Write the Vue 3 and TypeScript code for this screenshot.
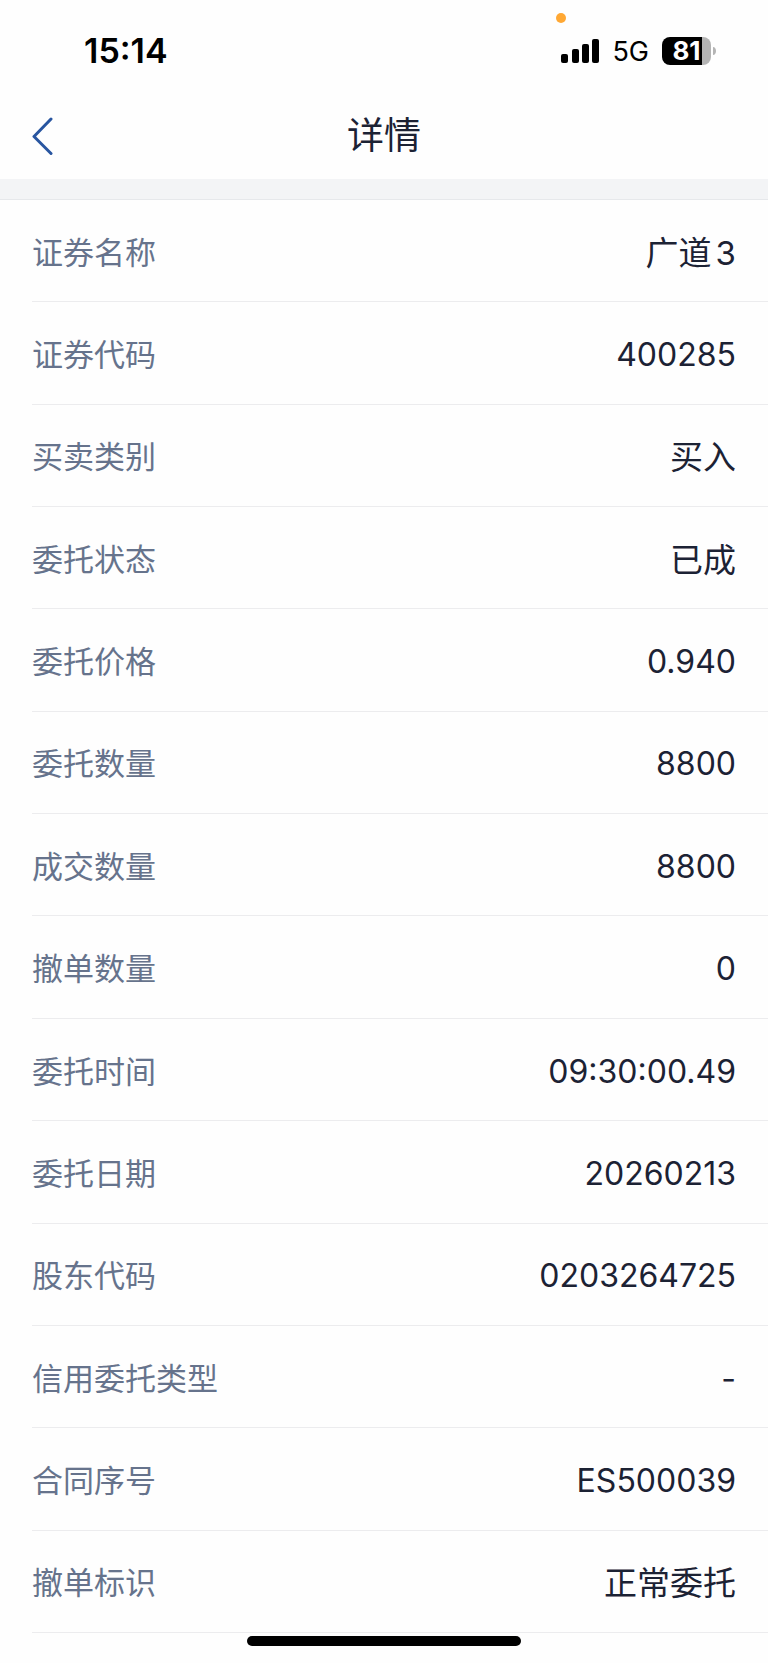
<script setup lang="ts">
interface Field {
  label: string
  value: string
}

const fields: Field[] = [
  { label: '证券名称', value: '广道3' },
  { label: '证券代码', value: '400285' },
  { label: '买卖类别', value: '买入' },
  { label: '委托状态', value: '已成' },
  { label: '委托价格', value: '0.940' },
  { label: '委托数量', value: '8800' },
  { label: '成交数量', value: '8800' },
  { label: '撤单数量', value: '0' },
  { label: '委托时间', value: '09:30:00.49' },
  { label: '委托日期', value: '20260213' },
  { label: '股东代码', value: '0203264725' },
  { label: '信用委托类型', value: '-' },
  { label: '合同序号', value: 'ES500039' },
  { label: '撤单标识', value: '正常委托' },
]

const isLatin = (value: string): boolean => /^[\w.:-]+$/.test(value)
</script>

<template>
  <div class="screen">
    <div class="status">
      <time class="clock">15:14</time>
      <div class="indicators">
        <svg class="signal" viewBox="0 0 40 26" aria-hidden="true">
          <rect x="1" y="16" width="7" height="9" rx="2" />
          <rect x="12" y="11" width="7" height="14" rx="2" />
          <rect x="22" y="6" width="7" height="19" rx="2" />
          <rect x="32" y="1" width="7" height="24" rx="2" />
        </svg>
        <span class="network">5G</span>
        <div class="battery">
          <div class="cell"><span class="level">81</span></div>
          <svg class="cap" viewBox="0 0 4 10" aria-hidden="true">
            <path d="M0 1C2 1 3 3 3 5S2 9 0 9Z" />
          </svg>
        </div>
      </div>
      <span class="recording"></span>
    </div>

    <header class="nav">
      <button class="back" type="button" aria-label="返回">
        <svg viewBox="0 0 22 40" aria-hidden="true">
          <path d="M19 3L2 20.500L19 37.500" />
        </svg>
      </button>
      <h1 class="title">详情</h1>
    </header>

    <div class="band"></div>

    <dl class="list">
      <div v-for="field in fields" :key="field.label" class="row">
        <dt>{{ field.label }}</dt>
        <dd :class="{ latin: isLatin(field.value) }">{{ field.value }}</dd>
      </div>
    </dl>

    <div class="footer"><span class="home"></span></div>
  </div>
</template>

<style>
body {
  margin: 0;
  background: #fefefe;
}
</style>

<style scoped>
.screen {
  display: flex;
  flex-direction: column;
  min-height: 100vh;
  background: #fefefe;
  color: #1c2234;
  font-family: Inter, "Noto Sans CJK SC", sans-serif;
}

.status {
  position: relative;
  display: flex;
  align-items: center;
  justify-content: space-between;
  box-sizing: border-box;
  height: 90px;
  padding: 12px 51px 0 84px;
  color: #000;
}

.clock {
  font-size: 34px;
  font-weight: 600;
  line-height: 40px;
}

.indicators {
  display: flex;
  align-items: center;
}

.signal {
  width: 40px;
  height: 26px;
}

.network {
  margin: 2px 13px 0 12px;
  font-size: 27px;
  line-height: 32px;
}

.battery {
  display: flex;
  align-items: center;
  gap: 2px;
}

.cell {
  width: 49px;
  height: 28px;
  border-radius: 8px;
  background: linear-gradient(to right, #000 82%, #b4b4b4 82%);
  text-align: center;
}

.level {
  display: block;
  color: #fff;
  font-size: 26px;
  font-weight: 700;
  line-height: 28px;
}

.cap {
  width: 4px;
  height: 10px;
  fill: #b4b4b4;
}

.recording {
  position: absolute;
  top: 13px;
  right: 202px;
  width: 10px;
  height: 10px;
  border-radius: 50%;
  background: #ffa834;
}

.nav {
  display: grid;
  grid-template-columns: 1fr auto 1fr;
  align-items: center;
  box-sizing: border-box;
  height: 89px;
  padding: 2px 32px 0;
}

.back {
  justify-self: start;
  padding: 0;
  border: 0;
  background: none;
  cursor: pointer;
}

.back svg {
  display: block;
  width: 22px;
  height: 40px;
  fill: none;
  stroke: #2855a0;
  stroke-width: 3;
  stroke-linecap: round;
  stroke-linejoin: round;
}

.title {
  margin: 0;
  font-size: 37px;
  font-weight: 400;
  line-height: 52px;
}

.band {
  height: 20px;
  border-bottom: 1px solid #e6e8eb;
  background: #f3f4f6;
}

.list {
  display: grid;
  flex: 1;
  grid-auto-rows: 1fr;
  margin: 0;
  padding-left: 32px;
}

.row {
  display: flex;
  align-items: center;
  justify-content: space-between;
  min-height: 80px;
  padding: 4px 32px 0 0;
  border-bottom: 1px solid #ececee;
}

dt {
  color: #66738c;
  font-size: 31px;
  line-height: 46px;
}

dd {
  margin: 0;
  font-size: 33px;
  line-height: 48px;
  text-autospace: normal;
}

.latin {
  font-size: 32px;
}

.footer {
  display: flex;
  justify-content: center;
  height: 27px;
  padding-top: 3px;
}

.home {
  width: 274px;
  height: 10px;
  border-radius: 5px;
  background: #000;
}
</style>
